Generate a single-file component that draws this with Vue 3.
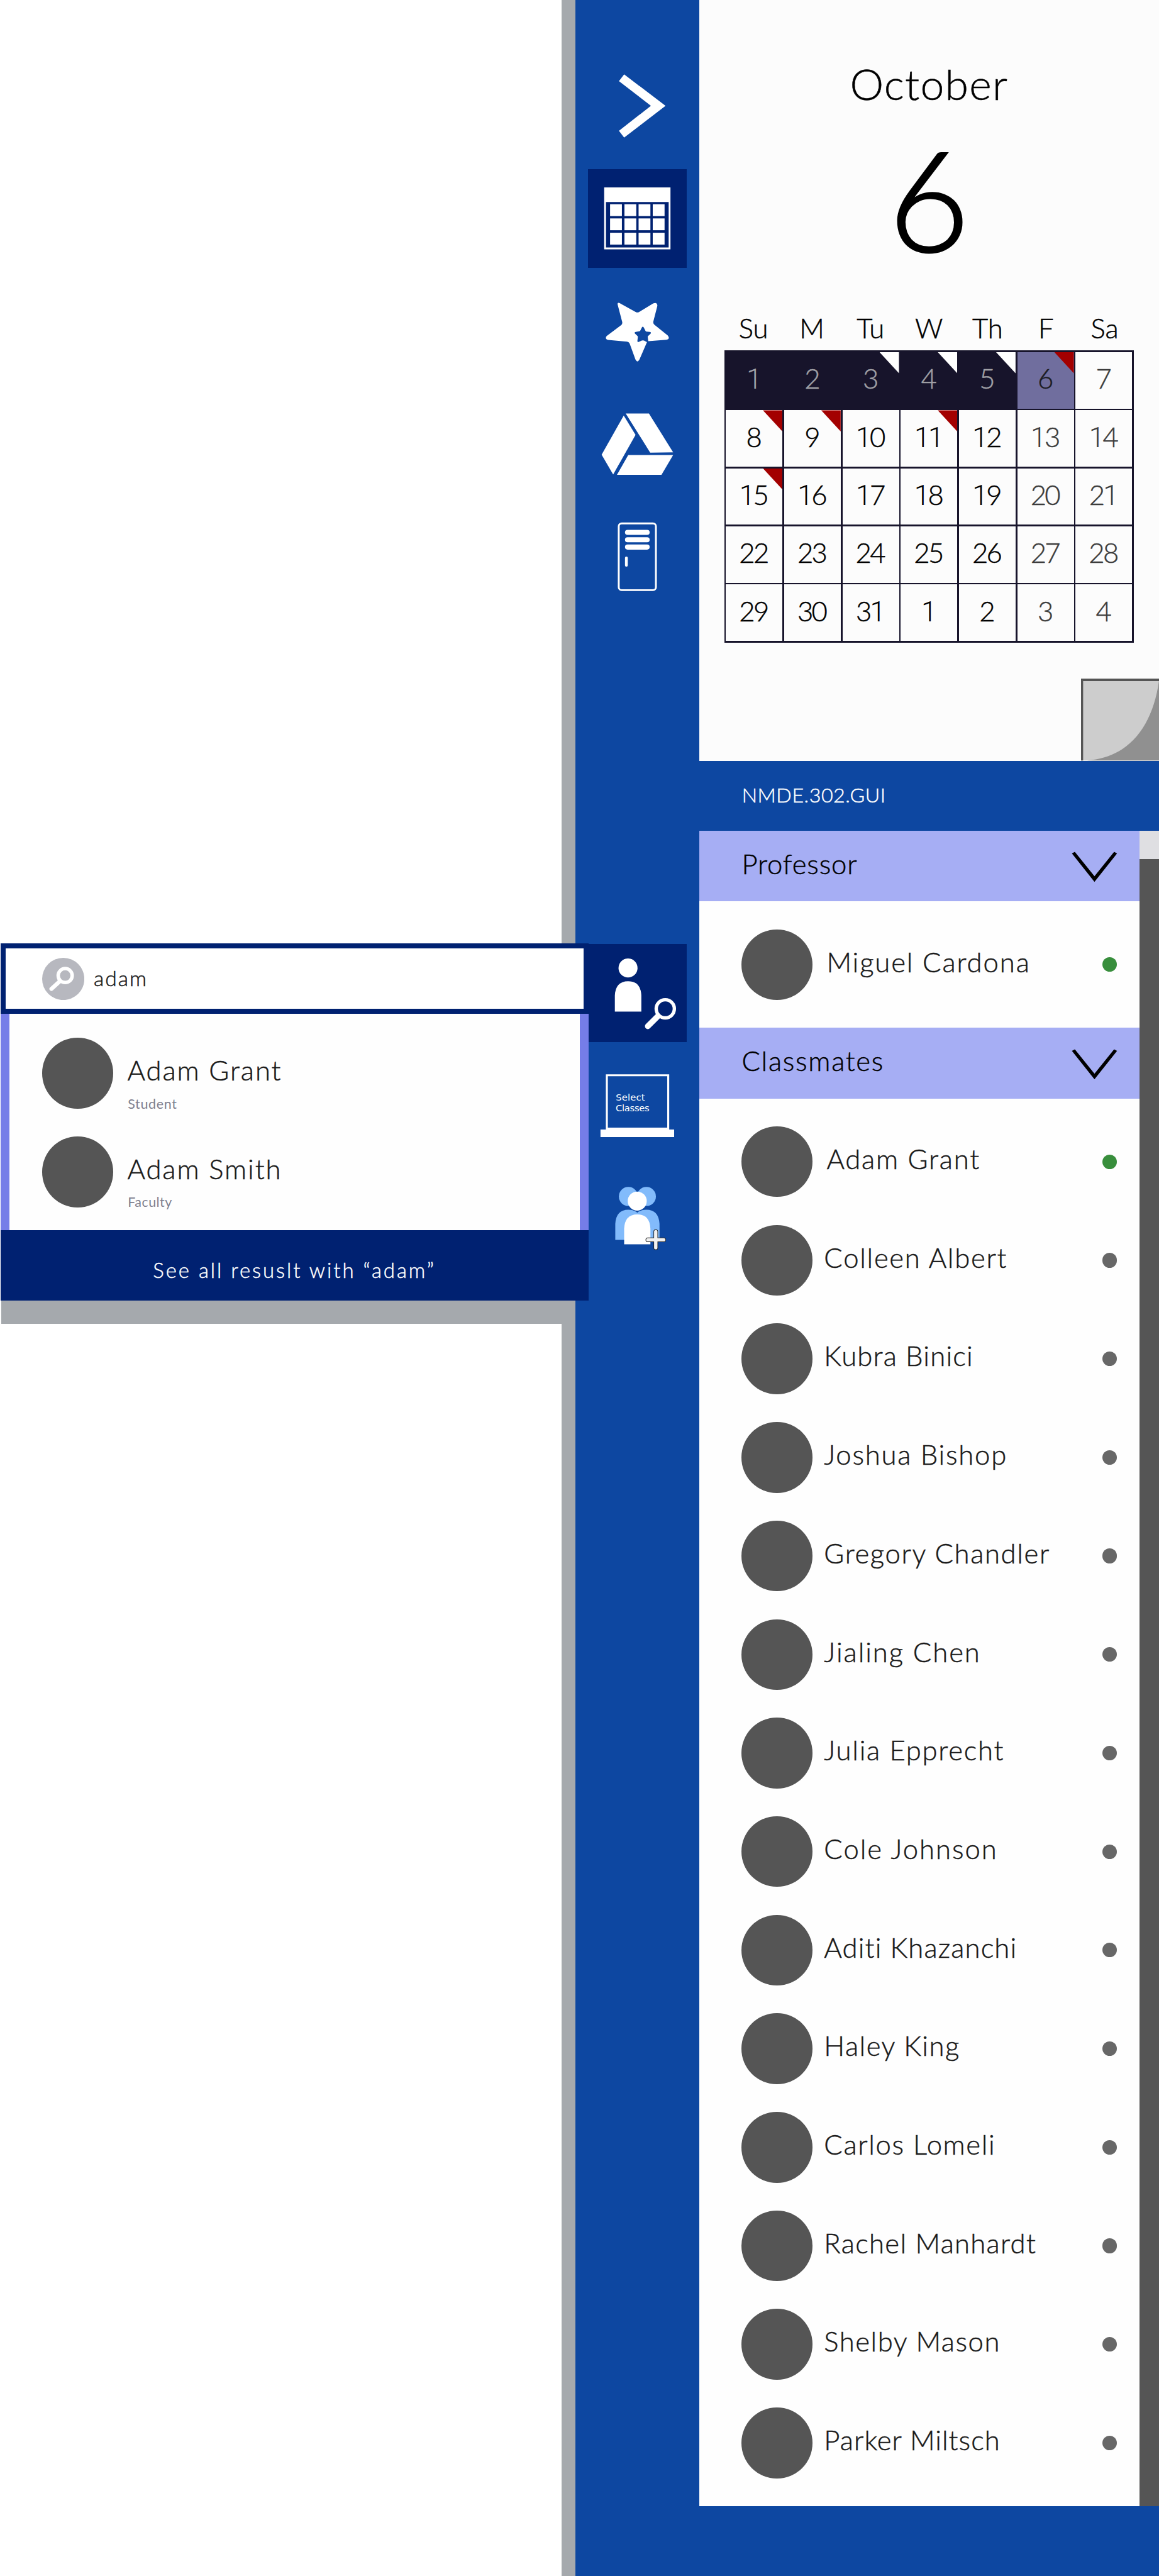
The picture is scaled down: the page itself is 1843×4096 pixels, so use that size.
<script setup>
// Lengths are in rem, 1rem = 100 design units (see the root font size below).
const weekdays = ['Su', 'M', 'Tu', 'W', 'Th', 'F', 'Sa']

const flags = { 2: 'white', 3: 'white', 4: 'white', 5: 'red', 7: 'red', 8: 'red', 10: 'red', 14: 'red' }
const days = Array.from({ length: 35 }, (_, i) => ({
  digits: String(i < 31 ? i + 1 : i - 30).split(''),
  past: i < 5,
  today: i === 5,
  muted: i % 7 > 4,
  flag: flags[i],
}))

const professors = [{ name: 'Miguel Cardona', width: 4.8, online: true, shift: true }]
const classmates = [
  { name: 'Adam Grant', width: 3.615, online: true, shift: true },
  { name: 'Colleen Albert', width: 4.32 },
  { name: 'Kubra Binici', width: 3.52 },
  { name: 'Joshua Bishop', width: 4.316 },
  { name: 'Gregory Chandler', width: 5.33 },
  { name: 'Jialing Chen', width: 3.685 },
  { name: 'Julia Epprecht', width: 4.245 },
  { name: 'Cole Johnson', width: 4.085 },
  { name: 'Aditi Khazanchi', width: 4.565 },
  { name: 'Haley King', width: 3.2 },
  { name: 'Carlos Lomeli', width: 4.04 },
  { name: 'Rachel Manhardt', width: 5.01 },
  { name: 'Shelby Mason', width: 4.155 },
  { name: 'Parker Miltsch', width: 4.16 },
]
const groups = [
  { title: 'Professor', width: 2.73, people: professors },
  { title: 'Classmates', width: 3.35, people: classmates },
]
const results = [
  { name: 'Adam Grant', width: 3.635, role: 'Student', roleWidth: 1.16 },
  { name: 'Adam Smith', width: 3.635, role: 'Faculty', roleWidth: 1.045 },
]

// Tracks a label so that it spans the given width in rem.
const vFit = {
  mounted(el, { value }) {
    const rem = parseFloat(getComputedStyle(document.documentElement).fontSize)
    const gap = (value * rem - el.getBoundingClientRect().width) / (el.textContent.trim().length - 1)
    el.style.letterSpacing = `${gap}px`
  },
}
</script>

<template>
  <div class="app">
    <div class="canvas"></div>
    <div class="edge"></div>

    <nav class="rail">
      <svg class="slot" viewBox="1392.7 134 233.5 233.5">
        <path fill="#fff" d="M1478.3 176 1576.3 250.6 1478.3 325.6 1466 309.6 1541.7 250.6 1466 192Z" />
      </svg>
      <svg class="slot active" viewBox="1392.7 400.7 233.5 233.5">
        <path fill="#fff" d="M1431 444H1588V590.4H1431Z" />
        <path fill="#002171" d="M1435.3 478.5H1583.7V586H1435.3Z" />
        <g v-for="y in [483.7, 517.3, 551.2]" :key="y" fill="#fff">
          <rect v-for="x in [1445, 1479, 1512.5, 1546]" :key="x" :x="x" :y="y" width="28" height="28" />
        </g>
      </svg>
      <svg class="slot" viewBox="1392.7 667.3 233.5 233.5">
        <path
          fill="#fff"
          transform="translate(1415 690) scale(.33333)"
          d="M144 95Q140 77 156 83L273 147Q284 152 295 147L396 86Q425 74 426 103L397 215Q395 226 403 236L500 314Q518 339 490 344L361 354 357 321 378 300Q384 290 373 288L347 286Q342 283 340 278L330 258Q322 245 315 258L305 278Q302 284 297 284L272 288Q260 291 267 300L285 317Q288 321 287 326L284 352Q284 364 295 359L315 350Q322 346 331 350L352 361 299 484Q284 511 270 484L229 371Q224 358 211 357L76 345Q50 336 66 317L170 239Q179 230 176 217Z"
        />
      </svg>
      <svg class="slot" viewBox="1392.7 934 233.5 233.5">
        <g fill="#fff">
          <path d="M1477.3 984.2 1505.3 1030.2 1452.3 1123.9 1425 1077Z" />
          <path d="M1482 979.3H1537L1594.3 1071.5 1540 1072Z" />
          <path d="M1488 1077.5H1594.3L1566.7 1124.4H1461.3Z" />
        </g>
      </svg>
      <svg class="slot" viewBox="1392.7 1200.6 233.5 233.5">
        <rect x="1465.5" y="1238.2" width="88" height="158" rx="7" fill="none" stroke="#fff" stroke-width="4.4" />
        <g fill="#fff">
          <rect x="1480.3" y="1253.4" width="58.4" height="12" rx="6" />
          <rect x="1480.3" y="1270.8" width="58.4" height="12" rx="6" />
          <rect x="1480.3" y="1288.2" width="58.4" height="12" rx="6" />
          <rect x="1480.3" y="1316.8" width="6.6" height="23.8" rx="3" />
        </g>
      </svg>

      <svg class="slot active people-search" viewBox="1392.7 2234 233.5 233.5">
        <ellipse cx="1487.5" cy="2290.8" rx="22.5" ry="22.5" fill="#fff" />
        <path fill="#fff" d="M1456.3 2393.9V2356Q1458 2322.4 1487.7 2322.4T1519 2356V2393.9Z" />
        <circle cx="1575.7" cy="2387.5" r="21.5" fill="none" stroke="#fff" stroke-width="8" />
        <path d="M1534.3 2428.8 1557.5 2405.5" stroke="#fff" stroke-width="13.6" stroke-linecap="round" />
      </svg>
      <svg class="slot" viewBox="1392.7 2500.7 233.5 233.5">
        <path fill="#fff" d="M1435 2542.9H1585V2673.5H1596.7V2691.3H1422.3V2673.5H1435Z" />
        <path fill="#0d47a1" d="M1439.7 2547.4H1580.3V2668.9H1439.7Z" />
        <g class="board">
          <text x="1458.7" y="2604.6" textLength="69">Select</text>
          <text x="1458.3" y="2629.6" textLength="80">Classes</text>
        </g>
      </svg>
      <svg class="slot" viewBox="1392.7 2767.3 233.5 233.5">
        <g fill="#82bbfb">
          <circle cx="1488.3" cy="2832" r="22.5" />
          <circle cx="1531" cy="2832" r="22.5" />
          <path d="M1457.3 2934.7V2897Q1459 2863.3 1488.4 2863.3T1519.5 2897V2934.7Z" />
          <path d="M1499.7 2934.7V2897Q1501.4 2863.3 1530.8 2863.3T1562 2897V2934.7Z" />
        </g>
        <circle cx="1509.3" cy="2842.9" r="22.5" fill="#fff" />
        <path fill="#fff" d="M1478.3 2945.4V2908Q1480 2874.5 1509.4 2874.5T1540.5 2908V2945.4Z" />
        <g stroke-linecap="round">
          <path d="M1553.2 2915.3V2953.3M1534.4 2934.7H1572" stroke="#222" stroke-width="10.8" />
          <path d="M1553.2 2915.3V2953.3M1534.4 2934.7H1572" stroke="#f1f1f1" stroke-width="8" />
        </g>
      </svg>
    </nav>

    <main class="main">
      <section class="calendar">
        <h1 class="month"><span v-fit="3.73">October</span></h1>
        <div class="date">6</div>
        <div class="weekdays">
          <span v-for="d in weekdays" :key="d">{{ d }}</span>
        </div>
        <div class="grid">
          <div
            v-for="(day, i) in days"
            :key="i"
            class="day"
            :class="{ past: day.past, today: day.today, muted: day.muted }"
          >
            <span class="number"><span v-for="(n, k) in day.digits" :key="k" :class="{ one: n === '1' }">{{ n }}</span></span>
            <i v-if="day.flag" class="flag" :class="day.flag"></i>
          </div>
        </div>
        <svg class="curl" viewBox="2558.8 1607.4 185.2 193.8">
          <path fill="#cdcdcd" d="M2558.8 1607.4H2744V1801.2H2558.8Z" />
          <path fill="#909090" d="M2744 1608C2730 1720 2672 1795 2573 1801.2H2744Z" />
          <path fill="#555" d="M2558.8 1607.4H2744V1613.4H2563.8V1801.2H2558.8Z" />
        </svg>
      </section>

      <header class="course"><span v-fit="3.4">NMDE.302.GUI</span></header>

      <div class="roster">
        <div class="lists">
          <section v-for="g in groups" :key="g.title">
            <div class="group-head">
              <span v-fit="g.width">{{ g.title }}</span>
              <svg class="chevron" viewBox="2537 2016.5 108.4 72.5">
                <path d="M2544.7 2017.2 2591.2 2075 2637.7 2017.2 2644.7 2021 2591.2 2088.2 2537.7 2021Z" />
              </svg>
            </div>
            <ul class="people">
              <li v-for="p in g.people" :key="p.name" class="person">
                <i class="avatar"></i>
                <span class="name" :class="{ shift: p.shift }"><span v-fit="p.width">{{ p.name }}</span></span>
                <i class="status" :class="{ online: p.online }"></i>
              </li>
            </ul>
          </section>
        </div>
        <div class="scrollbar"><div class="thumb"></div></div>
      </div>
    </main>

    <aside class="search">
      <div class="search-box">
        <svg class="search-icon" viewBox="99.7 2267 100 100">
          <circle cx="149.7" cy="2317" r="50" fill="#b7b8bf" />
          <circle cx="154.3" cy="2309" r="16.6" fill="none" stroke="#fff" stroke-width="8.2" />
          <path d="M121.8 2340.6 141 2323" stroke="#fff" stroke-width="9.6" stroke-linecap="round" />
        </svg>
        <span class="query"><span v-fit="1.25">adam</span></span>
      </div>
      <div class="results">
        <div v-for="r in results" :key="r.name" class="result">
          <i class="avatar"></i>
          <div class="who">
            <div class="who-name"><span v-fit="r.width">{{ r.name }}</span></div>
            <div class="who-role"><span v-fit="r.roleWidth">{{ r.role }}</span></div>
          </div>
        </div>
      </div>
      <div class="see-all"><span v-fit="6.65">See all resuslt with “adam”</span></div>
      <div class="shadow"></div>
    </aside>
  </div>
</template>

<style>
html {
  font-size: 67.165px;
  background: #fff;
}
body {
  margin: 0;
}
</style>

<style scoped>
* {
  box-sizing: border-box;
}
.app {
  position: relative;
  display: grid;
  grid-template-columns: 13.3rem 0.33rem 2.92rem minmax(0, 1fr);
  width: 1843px;
  height: 4096px;
  overflow: hidden;
  font-family: Lato, 'Open Sans', sans-serif;
  font-weight: 300;
  font-size: 0.65rem;
  line-height: 1.2;
  color: #000;
  -webkit-text-stroke: 0.5px currentColor;
}
.app span {
  white-space: nowrap;
}
[class] > span {
  display: inline-block;
}
svg {
  display: block;
}
.edge {
  background: #a5a9ad;
}
.rail {
  display: flex;
  flex-direction: column;
  align-items: center;
  gap: 0.332rem;
  padding-top: 1.34rem;
  background: #0d47a1;
}
.slot {
  flex: none;
  width: 2.335rem;
  height: 2.335rem;
  overflow: visible;
}
.slot.active {
  background: #002171;
}
.people-search {
  margin-top: 7.666rem;
}
.board text {
  font-family: 'DejaVu Sans', sans-serif;
  font-size: 22px;
  font-weight: 400;
  fill: #fff;
  -webkit-text-stroke: 0;
}

.main {
  display: flex;
  flex-direction: column;
  background: #0d47a1;
}
.calendar {
  position: relative;
  height: 18.01rem;
  padding: 1.363rem 0.595rem 0;
  background: #fcfcfc;
}
.month {
  height: 1.212rem;
  margin: 0;
  font-size: 1.01rem;
  font-weight: 300;
  text-align: center;
}
.date {
  height: 3.96rem;
  margin-top: 0.13rem;
  font-size: 3.3rem;
  text-align: center;
  -webkit-text-stroke-width: 3px;
}
.weekdays {
  display: grid;
  grid-template-columns: repeat(7, 1fr);
  height: 0.927rem;
  margin-top: 0.705rem;
  font-size: 0.65rem;
  text-align: center;
}
.grid {
  display: grid;
  grid-template-columns: repeat(7, 1fr);
  grid-template-rows: repeat(5, 1fr);
  gap: 0.042rem;
  width: 9.7rem;
  height: 6.918rem;
  padding: 0.042rem;
  background: #17142b;
}
.day {
  position: relative;
  display: flex;
  align-items: center;
  justify-content: center;
  padding: 0 0.04rem 0.1rem 0;
  background: #fcfcfc;
}
.number {
  letter-spacing: -0.04rem;
}
.one {
  font-family: Roboto, sans-serif;
  font-size: 0.66rem;
  line-height: 0;
  -webkit-text-stroke: 0;
}
.muted {
  color: #3c3c3c;
}
.past {
  background: #17142b;
  color: #a0a0a6;
}
.today {
  background: #706e9e;
  color: #1c1c24;
}
.flag {
  position: absolute;
  top: 0;
  right: 0;
  width: 0.46rem;
  height: 0.5rem;
  clip-path: polygon(0 0, 100% 0, 100% 100%);
}
.flag.white {
  background: #fff;
}
.flag.red {
  background: #a30000;
}
.curl {
  position: absolute;
  right: 0;
  bottom: 0;
  width: 1.852rem;
  height: 1.938rem;
}

.course {
  display: flex;
  align-items: center;
  height: 1.66rem;
  padding: 0 0 0.04rem 1.015rem;
  font-size: 0.48rem;
  color: #fff;
}
.roster {
  display: flex;
  height: 39.665rem;
}
.lists {
  flex: 1;
  background: #fefefe;
}
.group-head {
  display: flex;
  align-items: center;
  justify-content: space-between;
  height: 1.67rem;
  padding: 0 0.523rem 0 1.01rem;
  background: #a6aef4;
}
.group-head span {
  margin-top: -0.13rem;
}
.chevron {
  width: 1.084rem;
  height: 0.725rem;
  margin-top: 0.04rem;
}
.people {
  margin: 0;
  padding: 0.3315rem 0;
  list-style: none;
}
.person {
  display: flex;
  align-items: center;
  height: 2.3333rem;
  padding: 0 0.536rem 0 1.005rem;
}
.avatar {
  flex: none;
  width: 1.675rem;
  height: 1.675rem;
  border-radius: 50%;
  background: #555;
}
.name {
  flex: 1;
  padding: 0 0 0.15rem 0.28rem;
  color: #191919;
}
.name.shift {
  padding-left: 0.34rem;
}
.status {
  width: 0.345rem;
  height: 0.345rem;
  border-radius: 50%;
  background: #676767;
}
.status.online {
  background: #388e3c;
}
.scrollbar {
  width: 0.465rem;
  background: #555;
}
.thumb {
  height: 0.67rem;
  background: #dfdfe2;
}

.search {
  position: absolute;
  top: 22.337rem;
  left: 0.01rem;
  width: 13.92rem;
}
.search-box {
  display: flex;
  align-items: center;
  height: 1.668rem;
  padding-left: 0.865rem;
  border: 0.125rem solid #002171;
  background: #fff;
}
.search-icon {
  width: 1rem;
  height: 1rem;
}
.query {
  padding: 0 0 0.02rem 0.225rem;
  font-size: 0.5rem;
  color: #191919;
}
.results {
  height: 5.123rem;
  padding: 0.24rem 0 0 0.785rem;
  border: solid #757de8;
  border-width: 0 0.211rem;
  background: #fefefe;
}
.result {
  display: flex;
  align-items: center;
  height: 2.3333rem;
}
.who {
  padding: 0.455rem 0 0 0.335rem;
}
.who-name {
  height: 0.78rem;
  color: #191919;
}
.who-role {
  height: 0.39rem;
  margin: 0.222rem 0 0 0.012rem;
  font-size: 0.32rem;
  font-weight: 400;
  color: #80808e;
  -webkit-text-stroke: 0;
}
.see-all {
  display: flex;
  align-items: center;
  justify-content: center;
  height: 1.668rem;
  padding-top: 0.22rem;
  background: #002171;
  font-size: 0.49rem;
  color: #fff;
}
.shadow {
  width: 13.27rem;
  height: 0.55rem;
  margin-left: 0.025rem;
  background: #a5a9ad;
}
</style>
